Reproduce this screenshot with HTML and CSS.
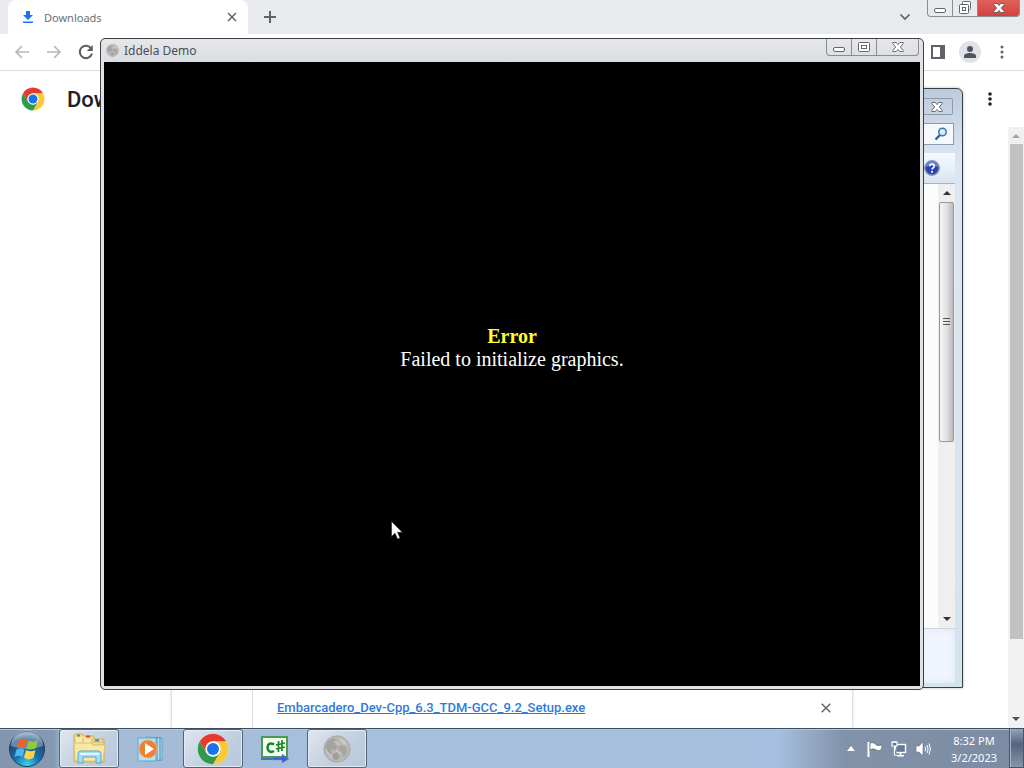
FILE: index.html
```html
<!DOCTYPE html>
<html lang="en">

<head>
    <meta charset="UTF-8">
    <meta name="viewport" content="width=device-width, initial-scale=1.0">
    <title>Desktop</title>
    <link rel="stylesheet" href="styles.css">
</head>

<body>
    <svg class="defs" width="0" height="0" aria-hidden="true">
        <symbol id="chrome" viewBox="0 0 48 48">
            <circle cx="24" cy="24" r="23" fill="#fff" />
            <path d="M24 12.5H43.9A23 23 0 0 1 24 47L34 29.7Z" fill="#fcc934" />
            <path d="M4.1 12.5A23 23 0 0 0 24 47L34 29.7L14 29.7Z" fill="#2f9a4b" />
            <path d="M24 12.5H43.9A23 23 0 0 0 4.1 12.5L14 29.8Z" fill="#e33b2e" />
            <circle cx="24" cy="24" r="11.5" fill="#fff" />
            <circle cx="24" cy="24" r="9" fill="#1a73e8" />
        </symbol>
        <symbol id="globe" viewBox="0 0 28 28">
            <circle cx="14" cy="14" r="13.2" fill="#bab8b4" stroke="#a3a19d" stroke-width=".8" />
            <path d="M5 6L10 3L14 5L12 9L15 12L12 15L8 14L9 19L6 18L2 12Z" fill="#a5a39f" />
            <path d="M15 3L21 5L24 10L20 9L18 6Z" fill="#cfcdc9" />
            <path d="M17 9L23 12L24 18L20 22L18 17L15 14Z" fill="#a8a6a1" />
            <path d="M10 19L14 17L17 22L14 25L10 24Z" fill="#a19f9b" />
            <path d="M3 16L7 20L9 24M11 6L17 10M13 16L19 19M20 5L22 9" stroke="#cdcbc7" stroke-width="1.2" fill="none" />
        </symbol>
        <symbol id="win-min" viewBox="0 0 12 12">
            <rect x=".5" y="6.5" width="11" height="4" rx="1.5" fill="#fff" stroke="#62656c" />
        </symbol>
        <symbol id="win-max" viewBox="0 0 12 12">
            <rect x=".5" y="1.5" width="11" height="9" rx="1" fill="#fff" stroke="#62656c" />
            <rect x="3.5" y="4.5" width="5" height="3" fill="#fff" stroke="#62656c" />
        </symbol>
        <symbol id="win-restore" viewBox="0 0 14 14">
            <rect x="4.5" y=".5" width="8" height="8" rx="1" fill="#fff" stroke="#62656c" />
            <rect x="1.5" y="3.5" width="9" height="9" rx="1" fill="#fff" stroke="#62656c" />
            <rect x="4.5" y="6.5" width="3" height="3" fill="#fff" stroke="#62656c" />
        </symbol>
        <symbol id="win-close" viewBox="0 0 12 12">
            <path d="M.8 1.5H4.3L6 3.6L7.7 1.5H11.2V2.6L8.3 6L11.2 9.4V10.5H7.7L6 8.4L4.3 10.5H.8V9.4L3.7 6L.8 2.6Z" fill="#fff" stroke="#5c5f67" stroke-width=".9" stroke-linejoin="round" />
        </symbol>
    </svg>

    <div class="browser">
        <div class="tab-strip">
            <div class="tab">
                <svg class="tab-icon" width="12" height="14" viewBox="0 0 12 14"><path d="M4 1H8V5H11L6 10L1 5H4ZM1 11.5H11V13H1Z" fill="#1a73e8" /></svg>
                <span class="tab-title">Downloads</span>
                <button class="icon-button" aria-label="Close tab"><svg width="10" height="10" viewBox="0 0 10 10"><path d="M1 1L9 9M9 1L1 9" stroke="#5f6368" stroke-width="1.5" /></svg></button>
            </div>
            <button class="icon-button new-tab" aria-label="New tab"><svg width="12" height="12" viewBox="0 0 12 12"><path d="M6 0V12M0 6H12" stroke="#5f6368" stroke-width="2" /></svg></button>
            <button class="icon-button tab-search" aria-label="Search tabs"><svg width="12" height="8" viewBox="0 0 12 8"><path d="M1.5 1.5L6 6L10.5 1.5" stroke="#5f6368" stroke-width="1.7" fill="none" /></svg></button>
            <div class="window-controls">
                <button aria-label="Minimize"><svg width="12" height="12"><use href="#win-min" /></svg></button>
                <button aria-label="Restore"><svg width="14" height="14"><use href="#win-restore" /></svg></button>
                <button class="close red" aria-label="Close"><svg width="12" height="12"><use href="#win-close" /></svg></button>
            </div>
        </div>
        <div class="toolbar">
            <button class="icon-button" aria-label="Back"><svg width="16" height="16" viewBox="0 0 16 16"><path d="M15 8H2M8 2L2 8L8 14" stroke="#b6b8bb" stroke-width="1.7" fill="none" /></svg></button>
            <button class="icon-button" aria-label="Forward"><svg width="16" height="16" viewBox="0 0 16 16"><path d="M1 8H14M8 2L14 8L8 14" stroke="#b6b8bb" stroke-width="1.7" fill="none" /></svg></button>
            <button class="icon-button" aria-label="Reload"><svg width="16" height="16" viewBox="0 0 16 16"><path d="M13.2 4.5A6.2 6.2 0 1 0 14 9.5" stroke="#5a5e63" stroke-width="2" fill="none" /><path d="M14.8 1V7H8.8Z" fill="#5a5e63" /></svg></button>
            <div class="toolbar-right">
                <button class="icon-button" aria-label="Side panel"><svg width="14" height="14" viewBox="0 0 14 14"><path d="M0 0H14V14H0ZM2 2V12H9V2Z" fill="#5f6368" fill-rule="evenodd" /></svg></button>
                <button class="icon-button avatar" aria-label="Profile"><svg width="14" height="14" viewBox="0 0 14 14"><circle cx="7" cy="4" r="3" fill="#4d5560" /><path d="M1 13V11C1 9 4 8 7 8S13 9 13 11V13Z" fill="#4d5560" /></svg></button>
                <button class="icon-button" aria-label="Chrome menu"><svg width="4" height="14" viewBox="0 0 4 14" fill="#5f6368"><circle cx="2" cy="2" r="1.5" /><circle cx="2" cy="7" r="1.5" /><circle cx="2" cy="12" r="1.5" /></svg></button>
            </div>
        </div>
        <div class="page-header">
            <svg width="24" height="24"><use href="#chrome" /></svg>
            <h1>Downloads</h1>
            <button class="icon-button page-menu" aria-label="More actions"><svg width="4" height="14" viewBox="0 0 4 14" fill="#202124"><circle cx="2" cy="2" r="1.8" /><circle cx="2" cy="7" r="1.8" /><circle cx="2" cy="12" r="1.8" /></svg></button>
        </div>
        <div class="page-body">
            <div class="downloads">
                <div class="download-card">
                    <div class="file-icon"></div>
                    <div class="file-info">
                        <a href="#">Embarcadero_Dev-Cpp_6.3_TDM-GCC_9.2_Setup.exe</a>
                        <button class="icon-button" aria-label="Remove from list"><svg width="10" height="10" viewBox="0 0 10 10"><path d="M.7 .7L9.3 9.3M9.3 .7L.7 9.3" stroke="#5f6368" stroke-width="1.4" /></svg></button>
                    </div>
                </div>
            </div>
            <div class="page-scrollbar">
                <svg width="8" height="4" viewBox="0 0 8 4"><path d="M0 4L4 0L8 4Z" fill="#a3a3a3" /></svg>
                <div class="page-thumb"></div>
                <svg width="8" height="4" viewBox="0 0 8 4"><path d="M0 0L4 4L8 0Z" fill="#505050" /></svg>
            </div>
        </div>
    </div>

    <div class="window explorer">
        <div class="explorer-title">
            <button aria-label="Close"><svg width="12" height="12"><use href="#win-close" /></svg></button>
        </div>
        <div class="explorer-search">
            <input type="text" aria-label="Search">
            <svg width="14" height="14" viewBox="0 0 14 14"><path d="M1.5 12.5L6 8" stroke="#315f9c" stroke-width="2.4" /><circle cx="8.5" cy="5" r="3.7" fill="#d5f0fb" stroke="#3b78b5" stroke-width="1.6" /></svg>
        </div>
        <div class="explorer-commands">
            <button class="icon-button" aria-label="Help"><svg width="16" height="16" viewBox="0 0 16 16"><circle cx="8" cy="8" r="7.2" fill="#2943b4" stroke="#8d94ac" stroke-width="1.5" /><path d="M2 7A6 6 0 0 1 14 7Q8 4 2 7" fill="#6681d6" /><path d="M5.7 6.2C5.7 3.3 10.5 3.4 10.3 6.2C10.2 7.7 8 7.8 8 9.5" stroke="#fff" stroke-width="1.7" fill="none" /><circle cx="8" cy="11.8" r="1.1" fill="#fff" /></svg></button>
        </div>
        <div class="explorer-content">
            <div class="explorer-scrollbar">
                <svg width="8" height="4" viewBox="0 0 8 4"><path d="M0 4L4 0L8 4Z" fill="#333" /></svg>
                <div class="explorer-thumb"><svg width="7" height="8" viewBox="0 0 7 8"><path d="M0 .5H7M0 3.5H7M0 6.5H7" stroke="#555" /></svg></div>
                <svg width="8" height="4" viewBox="0 0 8 4"><path d="M0 0L4 4L8 0Z" fill="#333" /></svg>
            </div>
        </div>
        <div class="explorer-details"></div>
    </div>

    <div class="window demo">
        <div class="demo-title">
            <svg width="13" height="13"><use href="#globe" /></svg>
            <span>Iddela Demo</span>
            <div class="window-controls">
                <button aria-label="Minimize"><svg width="12" height="12"><use href="#win-min" /></svg></button>
                <button aria-label="Maximize"><svg width="12" height="12"><use href="#win-max" /></svg></button>
                <button class="close" aria-label="Close"><svg width="12" height="12"><use href="#win-close" /></svg></button>
            </div>
        </div>
        <div class="demo-screen">
            <strong>Error</strong>
            <span>Failed to initialize graphics.</span>
        </div>
    </div>

    <div class="taskbar">
        <button class="start" aria-label="Start">
            <svg width="38" height="38" viewBox="0 0 38 38">
                <defs>
                    <radialGradient id="orb" cx=".5" cy=".95" r=".9">
                        <stop offset="0" stop-color="#35d5f5" />
                        <stop offset=".4" stop-color="#1573ae" />
                        <stop offset=".8" stop-color="#204a74" />
                        <stop offset="1" stop-color="#8daac0" />
                    </radialGradient>
                </defs>
                <circle cx="19" cy="19" r="17.5" fill="url(#orb)" stroke="#233e59" />
                <path d="M3 16A16 16 0 0 1 35 16Q19 22 3 16" fill="#b8d0df" opacity=".45" />
                <path d="M11 10Q15 7 19 10L17 18Q13 15.500 9 18Z" fill="#ef6129" />
                <path d="M20.5 10.5Q25 13 30 10L28 18Q23.500 20.500 18.500 18.500Z" fill="#95c93d" />
                <path d="M8.5 19.5Q12.5 17 16.5 19.5L14.5 27Q10.5 24.5 6.5 27Z" fill="#52b4ea" />
                <path d="M18 20Q23 22.500 27.500 20L25.500 28Q20 31 16 27.500Z" fill="#fdd14b" />
            </svg>
        </button>
        <button class="task open" aria-label="Windows Explorer">
            <svg width="36" height="32" viewBox="0 0 36 32">
                <path d="M3 3Q3 1 5 1H11L13 3H23V6H33V29H3Z" fill="#efd98c" stroke="#c9ae5c" />
                <path d="M5 4H14L16 6H20V28H5Z" fill="#f8e9ab" />
                <path d="M6 2.5H9" stroke="#35a853" stroke-width="2" />
                <path d="M15 3.5H19" stroke="#d44b38" stroke-width="2" />
                <path d="M24 7.5H28" stroke="#347acb" stroke-width="2" />
                <path d="M12 5V12H33M21 6V9H33" fill="none" stroke="#d6b75e" />
                <path d="M3 10H20L22 12H34L32 28H4Z" fill="#f7e8a6" stroke="#dcc270" />
                <path d="M7 30V21Q7 18 10 18H27Q30 18 30 21V30H25V24H12V30Z" fill="#a6dcf2" stroke="#58a9cf" />
                <path d="M9 21H28" stroke="#e2f8ff" stroke-width="2" />
            </svg>
        </button>
        <button class="task" aria-label="Windows Media Player">
            <svg width="30" height="28" viewBox="0 0 30 28">
                <path d="M10 2L26 3V25L10 26Z" fill="#b9def0" stroke="#5ba4cb" />
                <path d="M21 2V26M24 2V26" stroke="#3f8db9" />
                <path d="M2 3H20V26H2Z" fill="#b8def0" stroke="#65a9cc" />
                <circle cx="12" cy="14" r="9" fill="#ee8030" stroke="#dfb08c" />
                <path d="M9 8L18 14L9 20Z" fill="#fff" />
            </svg>
        </button>
        <button class="task open" aria-label="Google Chrome"><svg width="32" height="32"><use href="#chrome" /></svg></button>
        <button class="task" aria-label="C# editor">
            <svg width="30" height="28" viewBox="0 0 30 28">
                <rect x="2" y="2" width="25" height="20" fill="#f4fff2" stroke="#4a9b50" stroke-width="2" />
                <path d="M1 24H20" stroke="#4a6fc0" stroke-width="2" />
                <path d="M14 9.5C10 7 7.500 9.500 7.500 12.500S10 18.500 14 16" fill="none" stroke="#188424" stroke-width="2.5" />
                <path d="M18.5 6V17M22 5V16M16 10L25 8M16 14L25 12" fill="none" stroke="#188424" stroke-width="1.7" />
                <path d="M13 22H22V19L29 24L22 28V25H13Z" fill="#3f63ca" stroke="#6c87d6" stroke-width=".5" />
            </svg>
        </button>
        <button class="task open" aria-label="Iddela Demo"><svg width="28" height="28"><use href="#globe" /></svg></button>
        <div class="tray">
            <svg width="8" height="5" viewBox="0 0 8 5"><path d="M0 5L4 0L8 5Z" fill="#fff" /></svg>
            <svg width="16" height="16" viewBox="0 0 16 16"><path d="M1.5 1V16" stroke="#fff" stroke-width="2" /><path d="M3 2Q6 1 9 3V4Q12 5 15.500 4L14 9Q11 10.500 8.500 8.500Q6 7 3 9Z" fill="#fff" stroke="#4d5c70" stroke-width=".6" /></svg>
            <svg width="16" height="16" viewBox="0 0 16 16"><rect x="4.5" y="3.500" width="10" height="8" fill="#65788f" stroke="#fff" stroke-width="1.4" /><path d="M9.5 12V14M6 14.700H13" stroke="#fff" stroke-width="1.5" /><path d="M1 1V5H6V1ZM2.500 0V2M4.500 0V2M3.500 5V14H6" fill="#65788f" stroke="#fff" stroke-width="1.2" /></svg>
            <svg width="16" height="16" viewBox="0 0 16 16"><path d="M1 5H4L8 1V15L4 11H1Z" fill="#fff" stroke="#4d5c70" stroke-width=".5" /><path d="M10 5.500Q11.500 8 10 10.500M12 4Q14.200 8 12 12M14 2.500Q17 8 14 13.500" stroke="#fff" fill="none" /></svg>
            <div class="clock">
                <span>8:32 PM</span>
                <span>3/2/2023</span>
            </div>
        </div>
        <button class="show-desktop" aria-label="Show desktop"></button>
    </div>

    <svg class="cursor" width="12" height="19" viewBox="0 0 12 19"><path d="M.5.5V15.500L4 12.200L6.600 18L9 17L6.500 11.300H11.300Z" fill="#fff" stroke="#222" stroke-width=".6" /></svg>
</body>

</html>
```
FILE: styles.css
```css
* {
    box-sizing: border-box;
}

body {
    display: flex;
    flex-direction: column;
    height: 100vh;
    margin: 0;
    overflow: hidden;
    background: #fff;
    font-family: "Noto Sans", sans-serif;
    font-size: 11px;
    position: relative;
}

svg {
    display: block;
    flex: none;
}

button {
    padding: 0;
    border: none;
    background: none;
    font: inherit;
}

.defs {
    position: absolute;
}

.icon-button {
    display: flex;
    align-items: center;
    justify-content: center;
}

/* Window buttons */
.window-controls {
    display: flex;
    align-self: flex-start;
    height: 17px;
    border: 1px solid #8a8d93;
    border-top: none;
    border-radius: 0 0 4px 4px;
    overflow: hidden;
}

.window-controls button {
    display: flex;
    align-items: center;
    justify-content: center;
    width: 25px;
    border-right: 1px solid #8a8d93;
}

.window-controls .close {
    width: 41px;
    border-right: none;
}

.window-controls .red {
    background: linear-gradient(#e0605c, #d6403f);
}

/* Browser */
.browser {
    flex: 1;
    display: flex;
    flex-direction: column;
    min-height: 0;
    background: #fff;
}

.tab-strip {
    display: flex;
    align-items: center;
    height: 34px;
    padding: 0 4px 0 8px;
    background: #e8eaed;
}

.tab {
    display: flex;
    align-items: center;
    width: 240px;
    height: 34px;
    padding: 0 11px 0 14px;
    background: #fff;
    border-radius: 8px 8px 0 0;
}

.tab-title {
    flex: 1;
    margin-left: 10px;
    color: #6b6f74;
}

.new-tab {
    margin-left: 16px;
}

.tab-search {
    margin-left: auto;
    margin-right: 16px;
}

.toolbar {
    display: flex;
    align-items: center;
    gap: 16px;
    height: 37px;
    padding: 0 20px 0 14px;
    border-bottom: 1px solid #d9dbde;
}

.toolbar-right {
    display: flex;
    align-items: center;
    gap: 14px;
    margin-left: auto;
}

.avatar {
    width: 22px;
    height: 22px;
    border-radius: 50%;
    background: #dfe2e6;
}

.toolbar-right .icon-button:last-child {
    margin-left: 5px;
}

.page-header {
    display: flex;
    align-items: center;
    height: 56px;
    padding: 0 32px 0 21px;
    font-family: Roboto, sans-serif;
}

.page-header h1 {
    margin: 0 0 0 22px;
    font-size: 22px;
    font-weight: 500;
    color: #202124;
}

.page-menu {
    margin-left: auto;
}

.page-body {
    flex: 1;
    display: flex;
    min-height: 0;
}

.downloads {
    flex: 1;
    display: flex;
    align-items: flex-end;
    justify-content: center;
    padding-left: 16px;
    overflow: hidden;
}

.download-card {
    display: flex;
    width: 680px;
    height: 72px;
    box-shadow: 0 0 3px rgba(0, 0, 0, 0.3);
    font-family: Roboto, sans-serif;
}

.file-icon {
    width: 81px;
    border-right: 1px solid #dadce0;
}

.file-info {
    flex: 1;
    display: flex;
    align-items: flex-end;
    justify-content: space-between;
    padding: 0 21px 12px 24px;
}

.file-info a {
    color: #2f7bdb;
    font-size: 13px;
    line-height: 16px;
    font-weight: 500;
}

.file-info button {
    height: 16px;
}

.page-scrollbar {
    display: flex;
    flex-direction: column;
    align-items: center;
    width: 16px;
    padding: 7px 0;
    background: #f1f1f1;
}

.page-thumb {
    width: 13px;
    height: 495px;
    margin: 6px 0 auto;
    background: #c1c1c1;
}

/* Desktop windows */
.window {
    position: absolute;
    display: flex;
    flex-direction: column;
    border: 1px solid #3c3f46;
}

.explorer {
    top: 88px;
    left: 300px;
    width: 663px;
    height: 600px;
    padding: 0 7px 4px;
    border-radius: 6px 6px 0 0;
    background: linear-gradient(#bccbdc, #dce6f3 12%, #dae5f2 45%, #d3e4eb);
    box-shadow: 0 0 3px rgba(0, 0, 0, 0.3);
}

.explorer-title {
    display: flex;
    justify-content: flex-end;
    height: 34px;
    padding: 9px 2px 8px 0;
}

.explorer-title button {
    display: flex;
    align-items: center;
    justify-content: center;
    width: 32px;
    border: 1px solid #8d9bac;
    border-radius: 2px;
}

.explorer-search {
    display: flex;
    align-items: center;
    align-self: flex-end;
    height: 22px;
    width: 180px;
    margin-right: 1px;
    padding-right: 5px;
    border: 1px solid #8d9bac;
    background: #f5f9fd;
}

.explorer-search input {
    flex: 1;
    min-width: 0;
    border: none;
    background: none;
}

.explorer-commands {
    display: flex;
    justify-content: flex-end;
    height: 31px;
    margin-top: 8px;
    padding-right: 15px;
    border-bottom: 1px solid #a5b5cc;
    background: linear-gradient(#f7fafd, #d9e5f2);
}

.explorer-content {
    flex: 1;
    display: flex;
    justify-content: flex-end;
    background: #fcfcfd;
}

.explorer-scrollbar {
    display: flex;
    flex-direction: column;
    align-items: center;
    width: 17px;
    padding: 7px 0;
    background: #efefef;
}

.explorer-thumb {
    display: flex;
    align-items: center;
    justify-content: center;
    width: 15px;
    height: 240px;
    margin: 7px 0 auto;
    border: 1px solid #979797;
    border-radius: 2px;
    background: linear-gradient(90deg, #f5f5f5, #e2e3e4 50%, #b8babe);
}

.explorer-details {
    height: 55px;
    border-top: 1px solid #ccd7e5;
    background: #f0f4fc;
    box-shadow: inset 0 0 6px #dbe6f5;
}

.demo {
    top: 38px;
    left: 100px;
    width: 824px;
    height: 652px;
    padding: 0 3px 3px;
    border-radius: 5px;
    background: #e0e1e4;
}

.demo-title {
    display: flex;
    align-items: center;
    height: 23px;
    padding: 0 1px 0 2px;
    background: linear-gradient(#e6e7e9, #dadde1);
    color: #4a4d52;
    font-size: 12px;
}

.demo-title span {
    flex: 1;
    margin-left: 5px;
}

.demo-screen {
    flex: 1;
    display: flex;
    flex-direction: column;
    align-items: center;
    justify-content: center;
    padding-bottom: 52px;
    background: #000;
    color: #fff;
    font-family: "Liberation Serif", serif;
    font-size: 20px;
    line-height: 23px;
}

.demo-screen strong {
    color: #ff3;
}

/* Taskbar */
.taskbar {
    display: flex;
    height: 40px;
    border-top: 1px solid #3b4c60;
    background: linear-gradient(90deg, #8396ad, #8599b3 54px, #a4b9d3 62px, #a6bfdc 300px, #a5bfde calc(100% - 245px), #8192a9 calc(100% - 180px), #7b8ba2);
    box-shadow: inset 0 1px #bac9da;
}

.start {
    width: 54px;
    margin-right: 5px;
    display: flex;
    align-items: center;
    justify-content: center;
}

.task {
    display: flex;
    align-items: center;
    justify-content: center;
    width: 60px;
    margin-right: 2px;
}

.task.open {
    border: 1px solid #52637a;
    border-radius: 3px;
    background: linear-gradient(135deg, #dfe6ef, #c1cfdf 60%, #b7c8dc);
    box-shadow: inset 0 0 0 1px #e4ebf3;
}

.tray {
    display: flex;
    align-items: center;
    gap: 8px;
    margin-left: auto;
    color: #fff;
}

.tray > svg:first-child {
    margin-right: 4px;
}

.clock {
    display: flex;
    flex-direction: column;
    align-items: center;
    width: 70px;
    line-height: 17px;
}

.show-desktop {
    width: 15px;
    border: 1px solid #46566c;
    border-top: none;
    background: linear-gradient(#93a3b8, #53657d 40%, #8595ab);
    box-shadow: inset 1px 0 #a9b7c8;
}

.cursor {
    position: absolute;
    top: 521px;
    left: 391px;
}
```
